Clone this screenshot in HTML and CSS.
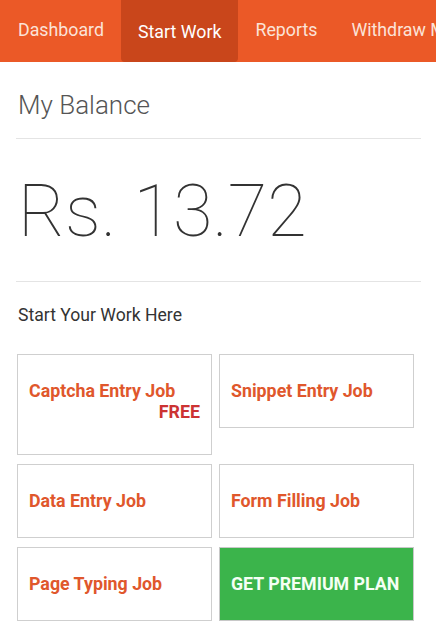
FILE: index.html
```html
<!DOCTYPE html>
<html lang="en">
<head>
  <meta charset="UTF-8">
  <meta name="viewport" content="width=device-width, initial-scale=1.0">
  <title>Start Work</title>
  <link rel="stylesheet" href="styles.css">
</head>
<body>

  <nav class="topnav">
    <a href="#" class="nav-link">Dashboard</a>
    <a href="#" class="nav-link active">Start Work</a>
    <a href="#" class="nav-link">Reports</a>
    <a href="#" class="nav-link">Withdraw Money</a>
  </nav>

  <div class="content">
    <h2 class="balance-title">My Balance</h2>
    <div class="balance-amount">Rs. 13.72</div>

    <p class="work-title">Start Your Work Here</p>

    <div class="jobs">
      <a href="#" class="job-card captcha">
        Captcha Entry Job
        <span class="free">FREE</span>
      </a>
      <a href="#" class="job-card">Snippet Entry Job</a>
      <a href="#" class="job-card">Data Entry Job</a>
      <a href="#" class="job-card">Form Filling Job</a>
      <a href="#" class="job-card">Page Typing Job</a>
      <a href="#" class="job-card premium">GET PREMIUM PLAN</a>
    </div>
  </div>

</body>
</html>
```

FILE: styles.css
```css
* {
  margin: 0;
  padding: 0;
  box-sizing: border-box;
}

body {
  font-family: Roboto, "Liberation Sans", Arial, sans-serif;
  background-color: #fff;
  color: #333;
  overflow: hidden;
}

.topnav {
  display: flex;
  height: 62px;
  background-color: #eb5927;
  white-space: nowrap;
  overflow: hidden;
  padding-left: 1px;
}

.nav-link {
  display: flex;
  align-items: center;
  padding: 0 17px 3px;
  color: #fbe3d8;
  text-decoration: none;
  font-size: 17.8px;
}

.nav-link.active {
  background-color: #c9461b;
  color: #fff;
  border-radius: 0 0 4px 4px;
  padding-bottom: 0;
}

.content {
  padding: 0 15px 0 16px;
}

.balance-title {
  font-weight: 300;
  font-size: 26px;
  color: #555;
  padding: 28px 2px 0;
  height: 77px;
  border-bottom: 1px solid #e4e4e4;
}

.balance-amount {
  font-weight: 100;
  font-size: 72px;
  color: #333;
  padding: 30px 0 0 2px;
  height: 143px;
  border-bottom: 1px solid #e4e4e4;
  line-height: 1.2;
}

.work-title {
  font-size: 17.6px;
  color: #333;
  padding: 23px 2px 0;
  height: 72px;
}

.jobs {
  display: grid;
  grid-template-columns: 195px 195px;
  column-gap: 7px;
  row-gap: 9px;
  align-items: start;
  padding-left: 1px;
}

.job-card {
  display: block;
  border: 1px solid #cfcfcf;
  padding: 24px 11px 24px;
  min-height: 74px;
  font-size: 17.8px;
  font-weight: 700;
  line-height: 24px;
  color: #e0572c;
  text-decoration: none;
}

.captcha {
  min-height: 101px;
}

.free {
  display: block;
  text-align: right;
  color: #cc3333;
  font-size: 17.8px;
  line-height: 18px;
}

.premium {
  background-color: #3bb44b;
  border-color: #c8c8c8;
  color: #f4fff4;
}
```
